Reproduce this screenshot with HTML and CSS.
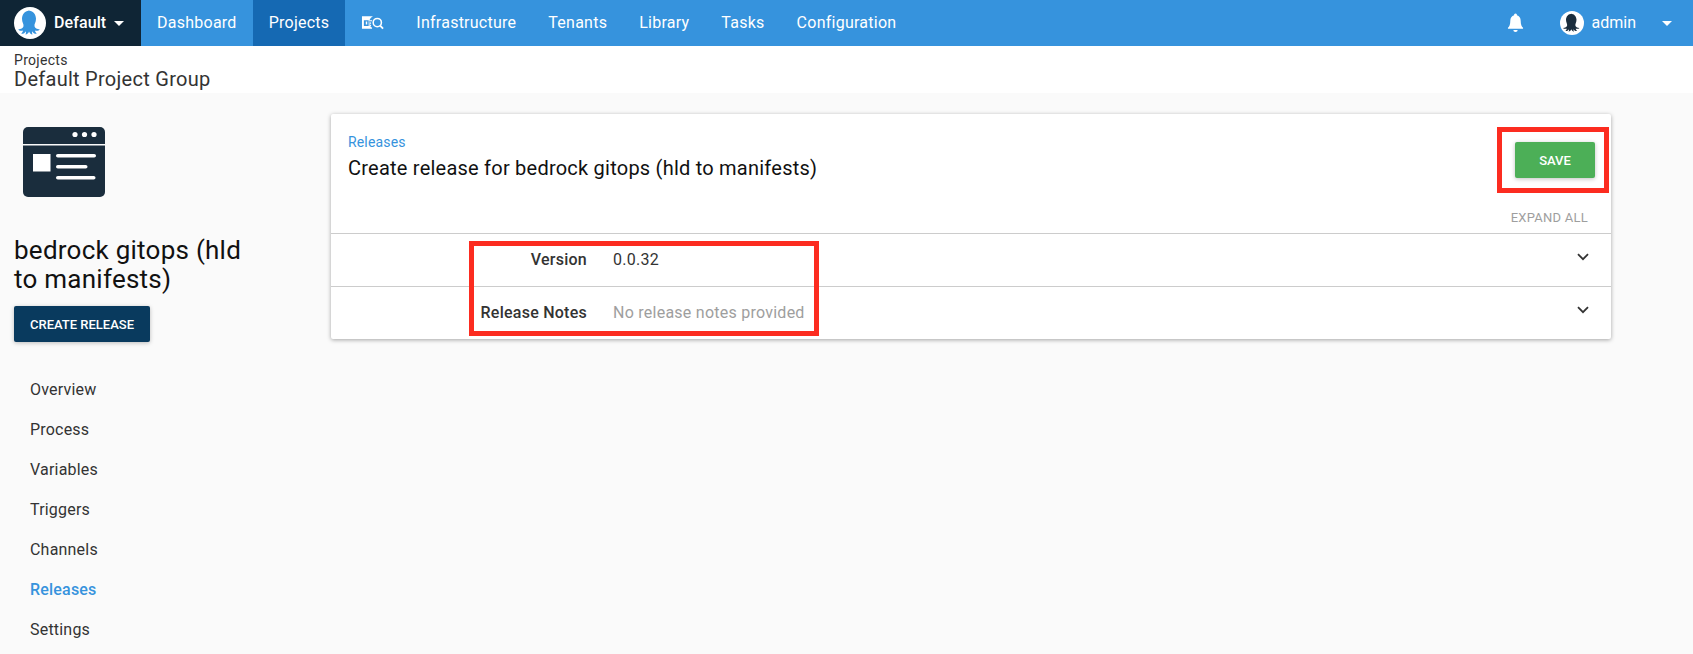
FILE: index.html
```html
<!DOCTYPE html>
<html lang="en">
<head>
<meta charset="utf-8">
<title>Create release</title>
<link rel="stylesheet" href="styles.css">
</head>
<body>
<header class="topbar">
  <div class="space">
    <svg class="logo" viewBox="0 0 32 32"><circle cx="16" cy="16" r="16" fill="#fff"/><path class="octo-blue" d="M16 3.500c-5.200 0-8 4-8 8.300 0 3.600 1.900 5.300 1.500 7.400-.4 1.800-2.500 2.900-5.300 3.300.8 1.200 3 1.600 4.900 1-.4 1.400-1 2.300-1.900 3.200 1.700.3 3.800-.6 4.700-2.500.2 1.300.1 2.300-.4 3.400 1.700-.3 3-1.500 3.500-3.200.6 1.500 1.800 2.800 3.500 3.200-.5-1.100-.6-2.100-.4-3.400.9 1.900 3 2.800 4.700 2.500-.9-.9-1.500-1.800-1.900-3.200 1.900.6 4.100.2 4.900-1-2.800-.4-4.900-1.500-5.300-3.300-.4-2.100 1.500-3.800 1.500-7.400 0-4.300-2.800-8.300-8-8.300z"/></svg>
    <span class="space-name">Default</span>
    <span class="caret"></span>
  </div>
  <nav class="menu">
    <a class="menu-item">Dashboard</a>
    <a class="menu-item active">Projects</a>
    <a class="menu-item icon-item">
      <svg class="search-icon" viewBox="0 0 24 16"><path class="white" fill-rule="evenodd" d="M1 1h11.500a7 7 0 0 0-1 12v1H1zM3 5h5v6H3zm2 1.500v3h1.500v-3zM9 5h2.500v1.300H9zM9 7.400h1.500v1.300H9zM9 9.700h1.500V11H9z"/><circle cx="17" cy="7.500" r="4.300" class="lens"/><path class="lens-h" d="M20 10.800l3 3"/></svg>
    </a>
    <a class="menu-item">Infrastructure</a>
    <a class="menu-item">Tenants</a>
    <a class="menu-item">Library</a>
    <a class="menu-item">Tasks</a>
    <a class="menu-item">Configuration</a>
  </nav>
  <div class="user">
    <svg class="bell" viewBox="0 0 18 20"><path class="white" d="M9 0a1.600 1.600 0 0 0-1.500 1.900C5 2.600 3.500 4.800 3.500 7.500c0 4-1 6-2.500 7.500v1h16v-1c-1.500-1.500-2.500-3.500-2.500-7.500 0-2.700-1.500-4.900-4-5.600A1.600 1.600 0 0 0 9 0zM6.700 17.500a2.300 2 0 0 0 4.600 0z"/></svg>
    <svg class="avatar" viewBox="0 0 32 32"><circle cx="16" cy="16" r="16" fill="#fff"/><path class="octo-dark" d="M16 3.500c-5.200 0-8 4-8 8.300 0 3.600 1.900 5.300 1.500 7.400-.4 1.800-2.500 2.900-5.300 3.300.8 1.200 3 1.600 4.900 1-.4 1.400-1 2.300-1.900 3.200 1.700.3 3.800-.6 4.700-2.500.2 1.300.1 2.300-.4 3.400 1.700-.3 3-1.500 3.500-3.200.6 1.500 1.800 2.800 3.500 3.200-.5-1.100-.6-2.100-.4-3.400.9 1.900 3 2.800 4.700 2.500-.9-.9-1.500-1.800-1.900-3.200 1.900.6 4.100.2 4.900-1-2.800-.4-4.900-1.500-5.300-3.300-.4-2.100 1.500-3.800 1.500-7.400 0-4.300-2.800-8.300-8-8.300z"/></svg>
    <span class="user-name">admin</span>
    <span class="caret user-caret"></span>
  </div>
</header>
<div class="crumbs">
  <div class="crumb-parent">Projects</div>
  <div class="crumb-title">Default Project Group</div>
</div>
<div class="page">
  <aside class="side">
    <svg class="project-logo" viewBox="0 0 82 70"><path class="navy" d="M5 0h72a5 5 0 0 1 5 5v12H0V5a5 5 0 0 1 5-5z"/><path class="navy" d="M0 18.500h82V65a5 5 0 0 1-5 5H5a5 5 0 0 1-5-5z"/><circle class="w" cx="52" cy="7.500" r="2.600"/><circle class="w" cx="61.500" cy="7.500" r="2.600"/><circle class="w" cx="71" cy="7.500" r="2.600"/><rect class="w" x="10" y="27" width="17.500" height="17.500"/><rect class="w" x="33" y="27" width="40" height="3.600" rx="1.800"/><rect class="w" x="33" y="38" width="31.500" height="3.600" rx="1.800"/><rect class="w" x="33" y="49" width="39.500" height="3.600" rx="1.800"/></svg>
    <h1 class="project-name">bedrock gitops (hld to manifests)</h1>
    <button class="create-btn">CREATE RELEASE</button>
    <ul class="side-nav">
      <li>Overview</li>
      <li>Process</li>
      <li>Variables</li>
      <li>Triggers</li>
      <li>Channels</li>
      <li class="current">Releases</li>
      <li>Settings</li>
    </ul>
  </aside>
  <main class="card">
    <div class="card-head">
      <div class="head-text">
        <a class="back-link">Releases</a>
        <h2 class="card-title">Create release for bedrock gitops (hld to manifests)</h2>
      </div>
      <button class="save-btn">SAVE</button>
    </div>
    <div class="expand-row"><span class="expand">EXPAND ALL</span></div>
    <div class="row">
      <span class="row-label">Version</span>
      <span class="row-value">0.0.32</span>
      <svg class="chev" viewBox="0 0 12 8"><path d="M1 1.200l5 5 5-5"/></svg>
    </div>
    <div class="row">
      <span class="row-label">Release Notes</span>
      <span class="row-value muted">No release notes provided</span>
      <svg class="chev" viewBox="0 0 12 8"><path d="M1 1.200l5 5 5-5"/></svg>
    </div>
    <div class="mark mark-save"></div>
    <div class="mark mark-fields"></div>
  </main>
</div>
</body>
</html>
```
FILE: styles.css
```css
* { box-sizing: border-box; }
html, body { margin: 0; height: 654px; overflow: hidden; }
body { background: #fafafa; font-family: Roboto, "Liberation Sans", sans-serif; color: #333; }

.topbar { display: flex; align-items: stretch; height: 46px; background: #3693dd; color: #fff; }
.space { display: flex; align-items: center; width: 141px; padding-left: 14px; background: #0f2535; }
.logo { width: 32px; height: 32px; }
.octo-blue { fill: #3693dd; }
.octo-dark { fill: #1a2d3d; }
.white { fill: #fff; }
.space-name { margin-left: 8px; padding-bottom: 2px; font-size: 16px; font-weight: 500; letter-spacing: .1px; }
.caret { width: 0; height: 0; margin-left: 8px; border-left: 5px solid transparent; border-right: 5px solid transparent; border-top: 5px solid #fff; }
.menu { display: flex; flex: 1; }
.menu-item { display: flex; align-items: center; padding: 0 16px 2px; font-size: 16px; letter-spacing: .25px; }
.menu-item.active { background: #1569b3; }
.icon-item { width: 55px; padding-bottom: 0; }
.search-icon { width: 24px; height: 16px; }
.lens { fill: none; stroke: #fff; stroke-width: 1.600; }
.lens-h { fill: none; stroke: #fff; stroke-width: 2; }
.user { display: flex; align-items: center; padding-right: 21px; }
.bell { width: 17px; height: 20px; margin-right: 36px; }
.avatar { width: 24px; height: 24px; }
.user-name { margin-left: 8px; padding-bottom: 2px; font-size: 16px; }
.user-caret { margin-left: 26px; }

.crumbs { height: 47px; padding: 7px 14px 0; background: #fff; }
.crumb-parent { font-size: 14px; line-height: 15px; letter-spacing: .3px; color: #333; }
.crumb-title { font-size: 20px; line-height: 22px; letter-spacing: .27px; color: #333; }

.page { display: flex; align-items: flex-start; padding-top: 21px; }
.side { width: 331px; flex: none; padding-left: 14px; }
.project-logo { display: block; width: 82px; height: 70px; margin: 13px 0 0 9px; }
.navy { fill: #1a2d3d; }
.w { fill: #fff; }
.project-name { width: 240px; margin: 39px 0 0; font-size: 26px; font-weight: 400; line-height: 29px; letter-spacing: .25px; color: #111; }
.create-btn { display: block; width: 136px; height: 36px; margin-top: 12px; padding: 0; border: 0; border-radius: 2px; background: #093a5e; color: #fff; font-family: inherit; font-size: 13px; font-weight: 500; box-shadow: 0 1px 4px rgba(0,0,0,.25); }
.side-nav { margin: 28px 0 0; padding: 0 0 0 16px; list-style: none; font-size: 16px; letter-spacing: .2px; }
.side-nav li { height: 40px; line-height: 40px; color: #333; }
.side-nav .current { color: #3693dd; font-weight: 500; }

.card { position: relative; width: 1280px; flex: none; background: #fff; border-radius: 2px; box-shadow: 0 1px 4px rgba(0,0,0,.35); }
.card-head { display: flex; justify-content: space-between; height: 91px; padding: 20px 16px 0 17px; }
.back-link { display: block; font-size: 14px; line-height: 16px; letter-spacing: .16px; color: #3693dd; }
.card-title { margin: 6px 0 0; font-size: 20px; font-weight: 400; line-height: 24px; letter-spacing: .23px; color: #111; }
.save-btn { width: 80px; height: 36px; margin-top: 8px; padding: 0; border: 0; border-radius: 2px; background: #4caf57; color: #fff; font-family: inherit; font-size: 13px; font-weight: 500; box-shadow: 0 1px 4px rgba(0,0,0,.25); }
.expand-row { display: flex; justify-content: flex-end; height: 28px; padding-right: 23px; }
.expand { font-size: 13px; line-height: 26px; letter-spacing: .25px; color: #9e9e9e; }
.row { display: flex; align-items: flex-start; height: 53px; padding-top: 16px; border-top: 1px solid #ccc; font-size: 16px; line-height: 20px; letter-spacing: .25px; }
.row-label { width: 256px; text-align: right; font-weight: 500; color: #333; }
.row-value { margin-left: 26px; color: #333; }
.muted { color: #9e9e9e; }
.chev { width: 12px; height: 8px; margin: 3px 22px 0 auto; fill: none; stroke: #333; stroke-width: 1.800; }

.mark { position: absolute; border: 5px solid #fc2c20; }
.mark-save { left: 1166px; top: 13px; width: 112px; height: 66px; }
.mark-fields { left: 138px; top: 127px; width: 350px; height: 95px; }
```
